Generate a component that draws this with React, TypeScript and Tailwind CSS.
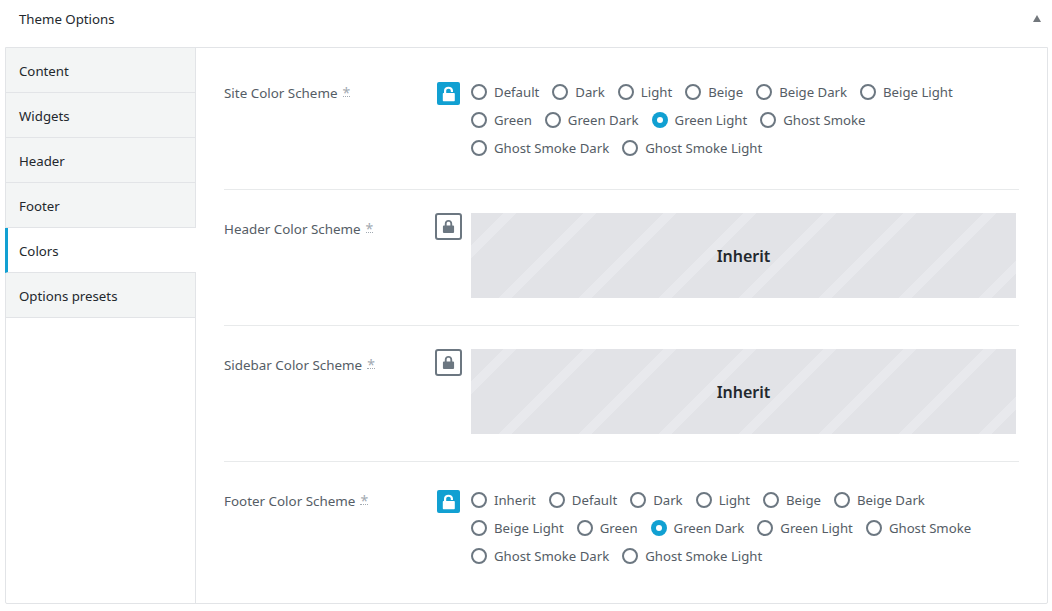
import React from 'react';

const fontStack = 'font-["Noto_Sans","Open_Sans",sans-serif]';

const tabs = ['Content', 'Widgets', 'Header', 'Footer', 'Colors', 'Options presets'];

const LockIcon = ({ open, className }: { open?: boolean; className: string }) => (
  <svg viewBox="0 0 14 16" className={className} fill="currentColor">
    {open ? (
      <path d="M2 7V4.8C2 2.3 3.9.8 6.5.8s4.5 1.5 4.5 4V6H8.8V4.8c0-1.3-.9-2-2.3-2s-2.3.7-2.3 2V7h7.6c.6 0 1 .4 1 1v6.2c0 .6-.4 1-1 1H1.8c-.6 0-1-.4-1-1V8c0-.6.4-1 1-1H2z" />
    ) : (
      <path d="M3 7V5c0-2.4 1.6-4 4-4s4 1.6 4 4v2h1c.6 0 1 .4 1 1v6c0 .6-.4 1-1 1H2c-.6 0-1-.4-1-1V8c0-.6.4-1 1-1h1zm2 0h4V5c0-1.3-.8-2-2-2s-2 .7-2 2v2z" />
    )}
  </svg>
);

const Radio = ({ label, checked }: { label: string; checked?: boolean }) => (
  <label className="mr-[13px] flex h-7 items-center gap-[7px]">
    {checked ? (
      <span className="flex h-4 w-4 items-center justify-center rounded-full bg-[#11a0d2]">
        <span className="h-[6px] w-[6px] rounded-full bg-white" />
      </span>
    ) : (
      <span className="h-4 w-4 rounded-full border-2 border-[#6c7781] bg-white" />
    )}
    <span className="pt-[2px] text-[13.2px] text-[#555d66]">{label}</span>
  </label>
);

const FieldLabel = ({ children, className }: { children: string; className: string }) => (
  <div className={`w-[211px] shrink-0 text-[13.4px] leading-[20px] text-[#555d66] ${className}`}>
    {children}
    <span className="ml-[5px] inline-block h-[14px] border-b border-dotted border-[#a2aab2] align-top text-[14px] leading-[19px] text-[#a2aab2]">*</span>
  </div>
);

const Unlocked = () => (
  <div className="ml-[2px] mr-[11px] mt-[4px] flex h-[23px] w-[23px] shrink-0 items-center justify-center rounded-[2px] bg-[#11a0d2] text-white">
    <LockIcon open className="h-[16px] w-[14px]" />
  </div>
);

const Locked = () => (
  <div className="mr-[9px] flex h-[27px] w-[27px] shrink-0 items-center justify-center rounded-[3px] border-2 border-[#6c7781] text-[#6c7781]">
    <LockIcon className="h-[15px] w-[13px]" />
  </div>
);

const InheritBox = () => (
  <div className="flex h-[85px] w-[545px] items-center justify-center bg-[#e2e3e7] bg-[repeating-linear-gradient(-45deg,#e2e3e7_0,#e2e3e7_17.3px,#e8e9ed_17.3px,#e8e9ed_26.5px,#e2e3e7_26.5px,#e2e3e7_56.57px)] text-[16px] font-semibold text-[#23282d]">
    Inherit
  </div>
);

const OptionRow = ({ title, options, checked }: { title: string; options: string[]; checked: string }) => (
  <div className="flex px-7 pb-[27px] pt-6">
    <FieldLabel className="pt-[5px]">{title}</FieldLabel>
    <Unlocked />
    <div className="flex w-[545px] flex-wrap">
      {options.map((o) => (
        <Radio key={o} label={o} checked={o === checked} />
      ))}
    </div>
  </div>
);

const LockedRow = ({ title }: { title: string }) => (
  <div className="flex px-7 pb-[27px] pt-[23px]">
    <FieldLabel className="pt-[6px]">{title}</FieldLabel>
    <Locked />
    <InheritBox />
  </div>
);

const Divider = () => <div className="mx-7 h-px bg-[#e8eaeb]" />;

export default function App() {
  return (
    <div className={`${fontStack} h-[611px] w-[1052px] overflow-hidden bg-white`}>
      <div className="flex h-[47px] items-center justify-between pb-2 pl-[19px] pr-[11px]">
        <span className="text-[13.25px] text-[#23282d]">Theme Options</span>
        <svg viewBox="0 0 8 7" className="mb-[2px] h-[7px] w-2 text-[#72777c]" fill="currentColor">
          <path d="M4 0l4 7H0z" />
        </svg>
      </div>
      <div className="ml-[5px] flex h-[557px] w-[1043px] rounded-b-[2px] border border-[#e2e4e7]">
        <div className="w-[190px] shrink-0 border-r border-[#e2e4e7]">
          {tabs.map((t) =>
            t === 'Colors' ? (
              <div key={t} className="-ml-px -mr-px flex h-[45px] items-center border-b border-l-[3px] border-b-[#e2e4e7] border-l-[#11a0d2] bg-white pl-[11px] pt-1 text-[13.25px] text-[#23282d]">
                {t}
              </div>
            ) : (
              <div key={t} className="flex h-[45px] items-center border-b border-[#e2e4e7] bg-[#f3f5f5] pl-[13px] pt-1 text-[13.25px] text-[#23282d]">
                {t}
              </div>
            )
          )}
        </div>
        <div className="min-w-0 flex-1 pt-[6px]">
          <OptionRow
            title="Site Color Scheme"
            checked="Green Light"
            options={['Default', 'Dark', 'Light', 'Beige', 'Beige Dark', 'Beige Light', 'Green', 'Green Dark', 'Green Light', 'Ghost Smoke', 'Ghost Smoke Dark', 'Ghost Smoke Light']}
          />
          <Divider />
          <LockedRow title="Header Color Scheme" />
          <Divider />
          <LockedRow title="Sidebar Color Scheme" />
          <Divider />
          <OptionRow
            title="Footer Color Scheme"
            checked="Green Dark"
            options={['Inherit', 'Default', 'Dark', 'Light', 'Beige', 'Beige Dark', 'Beige Light', 'Green', 'Green Dark', 'Green Light', 'Ghost Smoke', 'Ghost Smoke Dark', 'Ghost Smoke Light']}
          />
        </div>
      </div>
    </div>
  );
}
